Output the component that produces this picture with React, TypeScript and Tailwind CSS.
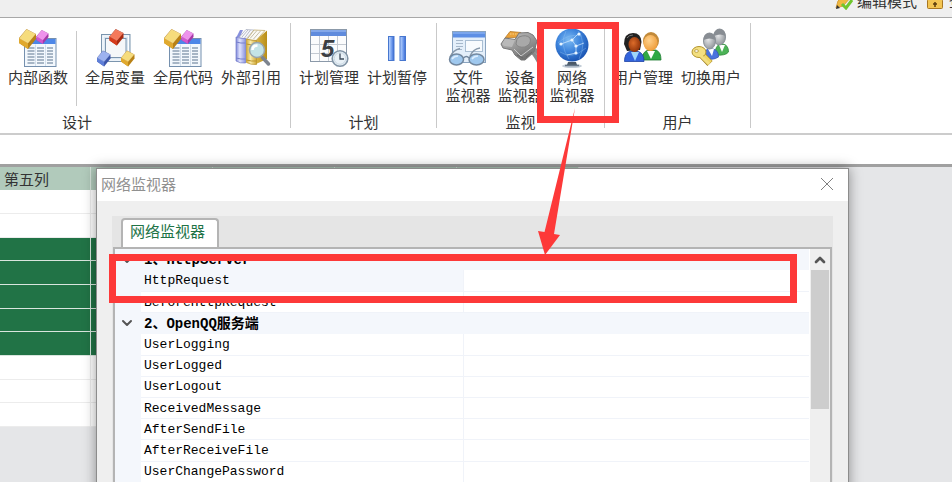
import React from 'react';
import { ChevronDown, ChevronUp } from 'lucide-react';

type Colors = { top: string; left: string; right: string };

const GOLD: Colors = { top: '#f6dc7c', left: '#e0a92e', right: '#b98216' };
const PINK: Colors = { top: '#ee92ec', left: '#d257cf', right: '#a837a8' };
const RED: Colors = { top: '#f5795a', left: '#d63c1c', right: '#a82a10' };
const BLUE: Colors = { top: '#9db2f0', left: '#5f7fd8', right: '#3c55aa' };

// Tilted brick used by the design icons
const Brick = ({ x, y, size, colors }: { x: number; y: number; size: number; colors: Colors }) => (
  <g transform={`translate(${x} ${y}) scale(${size / 17})`}>
    <path d="M7.500 0 L17 5 L17 10 L9 20 L0 14 L0 9 Z" fill={colors.right} />
    <path d="M0 9 L9 14 L9 20 L0 14 Z" fill={colors.left} />
    <path d="M7.500 0.500 L16.500 5 L9 14 L0.500 9.200 Z" fill={colors.top} stroke="#fff" strokeOpacity="0.350" strokeWidth="0.600" />
  </g>
);

const Icon = ({ children }: { children: React.ReactNode }) => (
  <svg viewBox="0 0 40 40" className="block h-10 w-10" aria-hidden="true">
    {children}
  </svg>
);

const FunctionIcon = () => (
  <Icon>
    <rect x="6.500" y="10.500" width="31.500" height="28" fill="#f3f8fd" stroke="#7590ae" />
    <rect x="7" y="11" width="30.500" height="5" fill="#4d87e8" />
    <path d="M17.500 16.500V38M27.500 16.500V38" stroke="#d3dfec" />
    {[20, 23, 26, 29, 32, 35].map((y) => (
      <path key={y} d={`M9.500 ${y}h7M19 ${y}h7M29 ${y}h6`} stroke="#8fa0b4" strokeWidth="1.300" />
    ))}
    <Brick x={18.5} y={2} size={12} colors={PINK} />
    <Brick x={1} y={1} size={17} colors={GOLD} />
  </Icon>
);

const VariableIcon = () => (
  <Icon>
    <rect x="6.500" y="6.500" width="28.500" height="27" fill="#dbe7f2" stroke="#7b95ae" />
    <rect x="8" y="8" width="25.500" height="24" fill="none" stroke="#fff" />
    <rect x="10.500" y="10.500" width="20.500" height="19" fill="#f5f7f9" stroke="#7b95ae" />
    <Brick x={14.5} y={1} size={14} colors={RED} />
    <Brick x={2} y={22.5} size={13.5} colors={BLUE} />
    <Brick x={26} y={22.5} size={13.5} colors={GOLD} />
  </Icon>
);

const BooksIcon = () => (
  <Icon>
    <defs>
      <linearGradient id="bookBlue">
        <stop offset="0" stopColor="#7f88d8" />
        <stop offset="0.400" stopColor="#e0e3ff" />
        <stop offset="1" stopColor="#8a93de" />
      </linearGradient>
      <linearGradient id="bookGold">
        <stop offset="0" stopColor="#d3ac3a" />
        <stop offset="0.400" stopColor="#faecaa" />
        <stop offset="1" stopColor="#cfa632" />
      </linearGradient>
      <linearGradient id="bookCover">
        <stop offset="0" stopColor="#d9b548" />
        <stop offset="1" stopColor="#b98e18" />
      </linearGradient>
    </defs>
    <path d="M5 10L9 2L12 2L9 9Z" fill="#8790dd" />
    <path d="M8 9.500L15 1.500L23 2L15 11Z" fill="#f8f9fc" stroke="#a4a9bb" strokeWidth="0.700" />
    <path d="M11 9l6-7M13.500 10l6-8" stroke="#a6abba" strokeWidth="0.800" />
    <path d="M5 9Q10 11 14.500 10.500V35Q9 35.500 5 33Z" fill="url(#bookBlue)" stroke="#7079c8" strokeWidth="0.700" />
    <path d="M5 14q5 1.500 9.500 1M5 30q5 1.500 9.500 1" stroke="#7780cc" fill="none" />
    <path d="M25 12L36 2.500V31L25 36Z" fill="url(#bookCover)" />
    <path d="M16 11.500L23 2L34 2.500L25 12.500Z" fill="#fbfaf4" stroke="#b9a25c" strokeWidth="0.700" />
    <path d="M19 10.500l7-8M22.500 11l7-8" stroke="#b5ad93" strokeWidth="0.800" />
    <path d="M15.500 11Q21 13 25.500 12.500V36.500Q20 37 15.500 34.500Z" fill="url(#bookGold)" stroke="#b8922a" strokeWidth="0.700" />
    <path d="M15.500 16q5 1.500 10 1M15.500 32q5 1.500 10 1" stroke="#bb952c" fill="none" />
    <path d="M31.500 29.500L37.500 36" stroke="#7d848f" strokeWidth="3.500" strokeLinecap="round" />
    <circle cx="26" cy="22" r="7.500" fill="#c4e4e6" stroke="#9aa5ab" strokeWidth="1.500" />
    <path d="M21.500 22q0-4.500 5-4.500" stroke="#fff" strokeWidth="2.500" fill="none" />
  </Icon>
);

const CalendarIcon = () => (
  <Icon>
    <rect x="1.500" y="1.500" width="36" height="32" fill="#fbfcfd" stroke="#8b99a9" />
    <rect x="2" y="2" width="35" height="6" fill="#5f8bdd" />
    <path d="M2 3h35" stroke="#a8c4f5" />
    <path d="M10.500 8V33M19.500 8V33M28.500 8V33M2 16.500H37M2 25.500H37" stroke="#c4cad2" />
    <text x="12" y="29" className="font-['Liberation_Sans',sans-serif] text-[24px] font-bold italic" fill="#3c3f44">5</text>
    <circle cx="31" cy="30.500" r="7.800" fill="#e9f1f7" stroke="#8093a5" strokeWidth="1.600" />
    <circle cx="31" cy="30.500" r="5.800" fill="none" stroke="#c8d7e3" />
    <path d="M31 25.500V31H35" stroke="#3d4b5b" strokeWidth="1.300" fill="none" />
  </Icon>
);

const PauseIcon = () => (
  <Icon>
    <defs>
      <linearGradient id="pauseBar">
        <stop offset="0" stopColor="#c7dcff" />
        <stop offset="0.450" stopColor="#85adf4" />
        <stop offset="1" stopColor="#3768d3" />
      </linearGradient>
    </defs>
    <rect x="11.500" y="8.500" width="5.500" height="24" fill="url(#pauseBar)" stroke="#4777cf" />
    <rect x="23" y="8.500" width="5.500" height="24" fill="url(#pauseBar)" stroke="#4777cf" />
  </Icon>
);

const FileWatchIcon = () => (
  <Icon>
    <rect x="4.500" y="3.500" width="33" height="31" fill="#e4effa" stroke="#8aa4c0" />
    <rect x="5" y="4" width="32" height="5.500" fill="#5d8fe5" />
    <path d="M5 5h32" stroke="#9abdf4" />
    <path d="M8 12.500h7M8 15.500h7M8 18.500h7M8 21.500h6" stroke="#a6b8cb" />
    <rect x="17.500" y="12.500" width="17" height="11" fill="#f8fbfe" stroke="#a9bed3" />
    <path d="M2 29 Q5 22 12 20.500M22 28 Q25 21 32 20" stroke="#8798aa" strokeWidth="1.500" fill="none" />
    <ellipse cx="8.500" cy="31.500" rx="7" ry="5.500" fill="#9fc8ee" stroke="#72879e" strokeWidth="1.500" />
    <ellipse cx="28.500" cy="31.500" rx="7.500" ry="5.500" fill="#9fc8ee" stroke="#72879e" strokeWidth="1.500" />
    <path d="M15.500 30q3-3 5.500 0" stroke="#72879e" strokeWidth="1.500" fill="none" />
    <path d="M4 31q2-3 6-3M24 31q2-3 6-3" stroke="#deefff" strokeWidth="1.500" fill="none" />
  </Icon>
);

const DeviceIcon = () => (
  <Icon>
    <defs>
      <linearGradient id="plug" x1="0" y1="0" x2="0.600" y2="1">
        <stop offset="0" stopColor="#c2c2c2" />
        <stop offset="0.500" stopColor="#9c9c9c" />
        <stop offset="1" stopColor="#707070" />
      </linearGradient>
    </defs>
    <path d="M28 21Q33 23 39 34M31 19Q36 21 40 28" stroke="#8a8a8a" strokeWidth="4" fill="none" />
    <path d="M5 10L10 3.500L21 4.500L22 9Z" fill="#eaa23a" stroke="#b87a26" strokeWidth="0.800" />
    <path d="M10 6h10" stroke="#f8d28c" strokeDasharray="1.500 1" />
    <path d="M1 16L5 10L15 11.500L19 5L28 4.500L33 7L37 13L34 24L25 32L21 32L15 27L12 22L3 20Z" fill="url(#plug)" stroke="#777" />
    <path d="M5 11L2 16L4 18L12 19L15 12Z" fill="#b9b9b9" />
    <path d="M19 9Q26 6 30 10Q32 16 25 19Q18 20 16 16Q16 11 19 9Z" fill="#a9a9a9" stroke="#858585" />
    <path d="M14 21L21 28L33 19" stroke="#c9c9c9" fill="none" />
    <path d="M17 27L23 30M26 29L32 24" stroke="#666" />
  </Icon>
);

const GlobeIcon = () => (
  <Icon>
    <defs>
      <radialGradient id="globe" cx="0.400" cy="0.350" r="0.700">
        <stop offset="0" stopColor="#7dbbf3" />
        <stop offset="0.500" stopColor="#3d84dc" />
        <stop offset="1" stopColor="#174fae" />
      </radialGradient>
    </defs>
    <ellipse cx="20" cy="38" rx="10" ry="2" fill="#c3cdd7" />
    <path d="M16 34h8l1 3h-10z" fill="#4b5968" />
    <path d="M13 37.500h14" stroke="#657587" strokeWidth="1.500" />
    <circle cx="20" cy="17" r="16.500" fill="url(#globe)" />
    <path d="M6 15q10-10 24-7M8 24q12 8 26-4M14 3q-7 14 3 28M26 3q9 12 1 28" stroke="#8fc0f2" strokeOpacity="0.400" fill="none" />
    <path d="M9 16L20 12L27 5M20 12L24 18L32 15M24 18L24 25L15 27" stroke="#d8edff" strokeOpacity="0.700" fill="none" />
    {[[9, 16], [20, 12], [27, 6], [24, 18], [24, 25]].map(([x, y]) => (
      <circle key={`${x}-${y}`} cx={x} cy={y} r="1.600" fill="#e8f5ff" />
    ))}
  </Icon>
);

const UsersIcon = () => (
  <Icon>
    <defs>
      <radialGradient id="paleFace" cx="0.400" cy="0.350" r="0.700">
        <stop offset="0" stopColor="#ffd18c" />
        <stop offset="1" stopColor="#ee9a35" />
      </radialGradient>
      <radialGradient id="darkFace" cx="0.400" cy="0.400" r="0.650">
        <stop offset="0" stopColor="#dc6c2a" />
        <stop offset="1" stopColor="#8c3008" />
      </radialGradient>
    </defs>
    <path d="M19 32q0-8 6-10h8q5 2 5 10z" fill="#2fa844" stroke="#1b7a2e" strokeWidth="0.800" />
    <path d="M24 23L28 31L32 23Z" fill="#fff" />
    <ellipse cx="28" cy="13" rx="8" ry="9" fill="#c28a3a" />
    <ellipse cx="27.500" cy="15" rx="7" ry="8" fill="url(#paleFace)" />
    <path d="M1.500 33.500q0-8 5-10h9q5.500 2 5.500 10z" fill="#3364dc" stroke="#1d43a5" strokeWidth="0.800" />
    <path d="M8 24L12 33L16 24Z" fill="#9fd5fa" />
    <path d="M1 16Q1 5 10 5Q18 5 18.500 14L17 22L4 23Z" fill="#222" />
    <ellipse cx="11.500" cy="16.500" rx="6" ry="7.500" fill="url(#darkFace)" />
    <path d="M4 10q2-3 6-3" stroke="#777" fill="none" />
  </Icon>
);

const SwitchUserIcon = () => (
  <Icon>
    <defs>
      <radialGradient id="greyFace" cx="0.400" cy="0.400" r="0.650">
        <stop offset="0" stopColor="#e6e7e9" />
        <stop offset="1" stopColor="#8f9499" />
      </radialGradient>
    </defs>
    <path d="M24 27q0-9 5-11h3q5.500 1 5.500 8q-3 4-13.500 3z" fill="#4bb356" stroke="#318a3b" strokeWidth="0.800" />
    <path d="M28 17l3 7l3-7z" fill="#fff" />
    <ellipse cx="28.500" cy="9" rx="6" ry="8" fill="url(#greyFace)" stroke="#8b9299" />
    <path d="M22.500 8q1-7 6-7q6 0 6 7q-5-3-12 0" fill="#888d93" />
    <path d="M13 30q0-8 4-9h5q5.500 1 5.500 8q-6 4-14.500 1z" fill="#4a73de" stroke="#3454b3" strokeWidth="0.800" />
    <path d="M17 21l4 7l2-7z" fill="#fff" />
    <ellipse cx="18.500" cy="13" rx="6" ry="8" fill="url(#greyFace)" stroke="#8b9299" />
    <path d="M12.500 12q0-7 6-7q6 0 6 7q-6-3-12 0" fill="#888d93" />
    <path d="M10 26L19 35.500" stroke="#a18122" strokeWidth="7" />
    <path d="M9 25L19 35" stroke="#eed667" strokeWidth="5.500" />
    <ellipse cx="8" cy="24" rx="7" ry="5.500" fill="#f3df80" stroke="#b3942d" />
    <path d="M8 26L18 36" stroke="#f3df80" strokeWidth="3" />
    <ellipse cx="5.500" cy="23" rx="2" ry="1.300" fill="#fff" stroke="#a98924" strokeWidth="0.700" />
  </Icon>
);

type Action = { label: string; icon: React.ReactNode };

const RibbonButton = ({ action, narrow }: { action: Action; narrow?: boolean }) => (
  <button type="button" className={`flex flex-col items-center ${narrow ? 'w-12' : 'w-15'}`}>
    {action.icon}
    <span className="whitespace-pre leading-[18px]">{action.label}</span>
  </button>
);

const Divider = () => <div className="my-[5px] w-px shrink-0 bg-[#c9c9c9]" />;

const Group = ({ title, actions, narrow }: { title: string; actions: Action[]; narrow?: boolean }) => (
  <section className="flex shrink-0 flex-col justify-between pt-2.5 pb-0.5">
    <div className={`flex items-start ${narrow ? 'gap-1 pr-2 pl-[7px]' : 'gap-2 pr-[9px] pl-2'}`}>
      {actions.map((action) => (
        <RibbonButton key={action.label} action={action} narrow={narrow} />
      ))}
    </div>
    <h2 className="text-center leading-[18px]">{title}</h2>
  </section>
);

const designActions: Action[] = [
  { label: '全局变量', icon: <VariableIcon /> },
  { label: '全局代码', icon: <FunctionIcon /> },
  { label: '外部引用', icon: <BooksIcon /> },
];

const planActions: Action[] = [
  { label: '计划管理', icon: <CalendarIcon /> },
  { label: '计划暂停', icon: <PauseIcon /> },
];

const monitorActions: Action[] = [
  { label: '文件\n监视器', icon: <FileWatchIcon /> },
  { label: '设备\n监视器', icon: <DeviceIcon /> },
  { label: '网络\n监视器', icon: <GlobeIcon /> },
];

const userActions: Action[] = [
  { label: '用户管理', icon: <UsersIcon /> },
  { label: '切换用户', icon: <SwitchUserIcon /> },
];

const Ribbon = () => (
  <nav className="flex h-[115px] shrink-0 bg-white">
    <section className="flex shrink-0 flex-col justify-between pt-2.5 pb-0.5">
      <div className="flex gap-2 pr-[9px] pl-2">
        <RibbonButton action={{ label: '内部函数', icon: <FunctionIcon /> }} />
        <div className="mt-[3px] h-[75px] w-px bg-[#c9c9c9]" />
        {designActions.map((action) => (
          <RibbonButton key={action.label} action={action} />
        ))}
      </div>
      <h2 className="pl-[62px] leading-[18px]">设计</h2>
    </section>
    <Divider />
    <Group title="计划" actions={planActions} />
    <Divider />
    <Group title="监视" actions={monitorActions} narrow />
    <Divider />
    <Group title="用户" actions={userActions} />
    <Divider />
  </nav>
);

const TopBar = () => (
  <header className="flex h-[17px] shrink-0 items-end justify-end overflow-hidden bg-[#efefef] pb-[7px]">
    <div className="-mr-[27px] flex gap-2.5">
      <button type="button" className="flex items-center gap-1 leading-[18px]">
        <svg viewBox="0 0 18 18" className="h-[18px] w-[18px]" aria-hidden="true">
          <path d="M1 16L3 9L11 1L16 5L8 14Z" fill="#f0b93f" stroke="#d9a03a" />
          <path d="M1 17L2 13L5 16Z" fill="#333" />
          <path d="M7 12L11 16L17 8" stroke="#6fc62c" strokeWidth="3" fill="none" />
        </svg>
        编辑模式
      </button>
      <button type="button" className="flex items-center gap-1.5 whitespace-nowrap leading-[18px]">
        <svg viewBox="0 0 16 18" className="h-[18px] w-4" aria-hidden="true">
          <path d="M4 8V4a4 4 0 0 1 8 0V8" stroke="#888" strokeWidth="2" fill="none" />
          <rect x="0.500" y="7.500" width="15" height="9" rx="1" fill="#f3c553" stroke="#a97722" />
          <path d="M8 10v5M6 12h4" stroke="#5c3c0c" strokeWidth="1.500" />
        </svg>
        登录
      </button>
    </div>
  </header>
);

const sheetRows = [false, false, true, true, true, true, true, false, false, false];

const Sheet = () => (
  <table className="h-[260px] w-[579px] table-fixed border-collapse">
    <thead>
      <tr className="h-[23px] bg-[#b1cabb]">
        <th className="w-[90px] border-r border-[#d5e2da] p-0 pl-1 text-left font-normal leading-4 text-[#333]">第五列</th>
        {[1, 2, 3, 4].map((col) => (
          <td key={col} className="border-r border-[#d5e2da] p-0" />
        ))}
      </tr>
    </thead>
    <tbody>
      {sheetRows.map((selected, i) => (
        <tr key={i} className={`h-5 ${selected ? 'bg-[#217346]' : 'bg-white'}`}>
          {[0, 1, 2, 3, 4].map((col) => (
            <td key={col} className={`border-r border-b p-0 ${selected ? 'border-[#d9e5de]' : 'border-[#ececec]'}`} />
          ))}
        </tr>
      ))}
    </tbody>
  </table>
);

type EventRow = { name: string; category?: boolean; selected?: boolean };

const eventRows: EventRow[] = [
  { name: '1、HttpServer', category: true },
  { name: 'HttpRequest', selected: true },
  { name: 'BeforeHttpRequest' },
  { name: '2、OpenQQ服务端', category: true },
  { name: 'UserLogging' },
  { name: 'UserLogged' },
  { name: 'UserLogout' },
  { name: 'ReceivedMessage' },
  { name: 'AfterSendFile' },
  { name: 'AfterReceiveFile' },
  { name: 'UserChangePassword' },
];

const EventTable = () => (
  <table className="h-[234px] min-w-0 flex-1 table-fixed border-collapse font-['Liberation_Mono','Noto_Sans_CJK_SC',monospace] text-[13px] text-black">
    <colgroup>
      <col className="w-[26px]" />
      <col className="w-[322px]" />
      <col />
    </colgroup>
    <tbody>
      {eventRows.map((row) =>
        row.category ? (
          <tr key={row.name} className="h-5 bg-[#f4f7fc]">
            <td className="p-0">
              <button type="button" aria-label="折叠" className="flex w-[23px] justify-center">
                <ChevronDown className="h-4 w-4 text-[#555]" strokeWidth={3} />
              </button>
            </td>
            <th colSpan={2} className="p-0 pl-[3px] text-left text-sm leading-4 font-bold">{row.name}</th>
          </tr>
        ) : (
          <tr key={row.name} className="h-5">
            <td className="bg-[#f4f7fc] p-0" />
            <td className={`border-r border-b border-[#f0f3f9] p-0 pt-px pl-[3px] leading-4 ${row.selected ? 'bg-[#f4f7fc]' : 'bg-white'}`}>
              {row.name}
            </td>
            <td className="border-b border-[#f0f3f9] bg-white p-0" />
          </tr>
        )
      )}
    </tbody>
  </table>
);

const MonitorDialog = () => (
  <div
    role="dialog"
    aria-label="网络监视器"
    className="absolute top-px right-[103px] -bottom-3 left-24 flex flex-col border border-[#8c8c8c] bg-[#efefef] shadow-[0_0_12px_rgba(0,0,0,0.4)]"
  >
    <div className="flex h-8 shrink-0 items-center justify-between bg-white pr-[15px] pb-0.5 pl-1">
      <span className="leading-5 text-[#909090]">网络监视器</span>
      <button type="button" aria-label="关闭">
        <svg viewBox="0 0 12 12" className="h-3 w-3" aria-hidden="true">
          <path d="M0 0L12 12M12 0L0 12" stroke="#808080" />
        </svg>
      </button>
    </div>

    <div className="mx-[15px] mt-[15px] flex min-h-0 flex-1 flex-col bg-[#e5e5e5] px-px pt-0.5">
      <div role="tablist" className="pl-2">
        <button
          type="button"
          role="tab"
          aria-selected="true"
          className="block h-[29px] rounded-t-sm border-2 border-b-0 border-[#b4b4b4] bg-white pr-3 pb-1.5 pl-[7px] leading-5 text-[#217346]"
        >
          网络监视器
        </button>
      </div>
      <div className="flex min-h-0 flex-1 items-start overflow-hidden border-2 border-[#b4b4b4] bg-white">
        <EventTable />
        <div className="ml-px flex w-5 shrink-0 flex-col self-stretch bg-[#efefef] px-px">
          <button type="button" aria-label="向上滚动" className="flex h-[21px] items-center justify-center">
            <ChevronUp className="h-4 w-4 text-[#555]" strokeWidth={4} />
          </button>
          <div className="h-[139px] bg-[#cdcdcd]" />
        </div>
      </div>
    </div>

    {/* Highlighted HttpRequest row */}
    <div className="pointer-events-none absolute top-[85px] right-[51px] left-3 h-[49px] border-7 border-[#fd3939]" />
  </div>
);

export default function App() {
  return (
    <div className="relative flex h-screen flex-col overflow-hidden bg-[#e5e6e8] font-['Noto_Sans_CJK_SC',sans-serif] text-[15px] text-[#333]">
      <TopBar />
      <div className="h-px shrink-0 bg-[#a8a8a8]" />
      <Ribbon />
      <div className="h-[31px] shrink-0 border-t-2 border-[#cccccc] bg-white" />
      <main className="relative min-h-0 flex-1 border-t-3 border-[#a0a0a0]">
        <Sheet />
        <MonitorDialog />
      </main>

      {/* Callout: network monitor button and the arrow down to its row */}
      <div className="pointer-events-none absolute top-[22px] left-[537px] h-[101px] w-[82px] border-7 border-[#fd3939]" />
      <svg viewBox="0 0 40 148" className="pointer-events-none absolute top-[108px] left-[537px] h-[148px] w-10" aria-hidden="true">
        <path d="M38 0L17 126L23 127L8 147L1 123L7.500 124Z" fill="#fd3939" />
      </svg>
    </div>
  );
}
